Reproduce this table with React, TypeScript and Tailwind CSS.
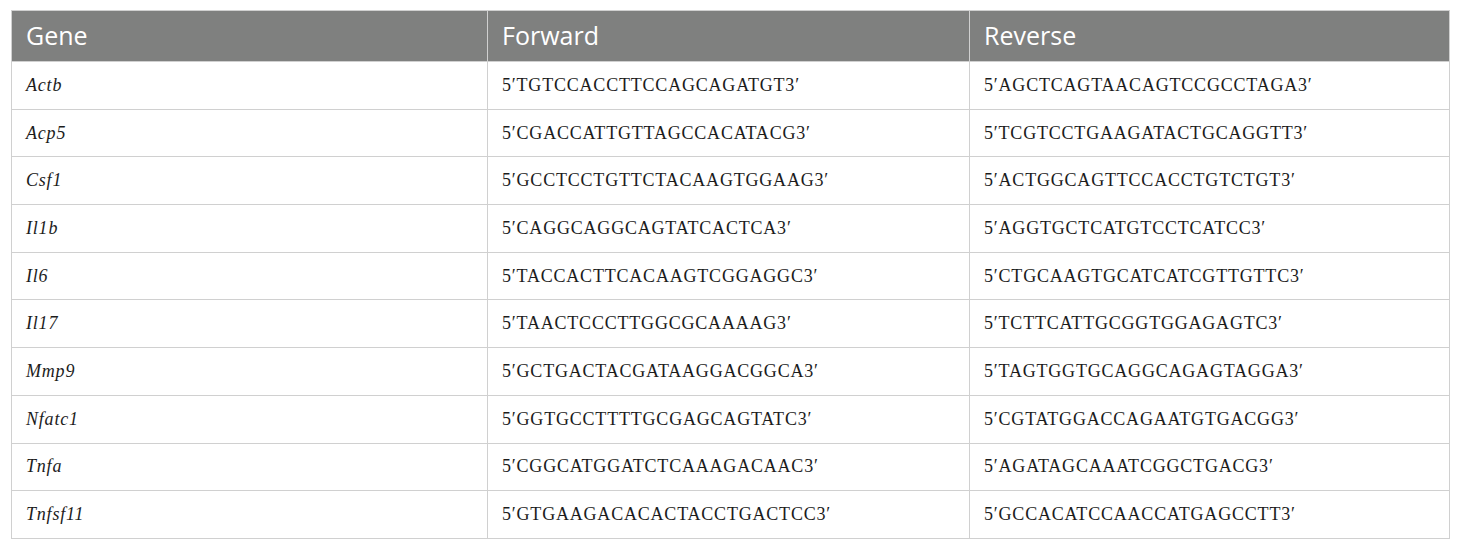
const rows = [
  ["Actb", "5′TGTCCACCTTCCAGCAGATGT3′", "5′AGCTCAGTAACAGTCCGCCTAGA3′"],
  ["Acp5", "5′CGACCATTGTTAGCCACATACG3′", "5′TCGTCCTGAAGATACTGCAGGTT3′"],
  ["Csf1", "5′GCCTCCTGTTCTACAAGTGGAAG3′", "5′ACTGGCAGTTCCACCTGTCTGT3′"],
  ["Il1b", "5′CAGGCAGGCAGTATCACTCA3′", "5′AGGTGCTCATGTCCTCATCC3′"],
  ["Il6", "5′TACCACTTCACAAGTCGGAGGC3′", "5′CTGCAAGTGCATCATCGTTGTTC3′"],
  ["Il17", "5′TAACTCCCTTGGCGCAAAAG3′", "5′TCTTCATTGCGGTGGAGAGTC3′"],
  ["Mmp9", "5′GCTGACTACGATAAGGACGGCA3′", "5′TAGTGGTGCAGGCAGAGTAGGA3′"],
  ["Nfatc1", "5′GGTGCCTTTTGCGAGCAGTATC3′", "5′CGTATGGACCAGAATGTGACGG3′"],
  ["Tnfa", "5′CGGCATGGATCTCAAAGACAAC3′", "5′AGATAGCAAATCGGCTGACG3′"],
  ["Tnfsf11", "5′GTGAAGACACACTACCTGACTCC3′", "5′GCCACATCCAACCATGAGCCTT3′"],
];

export default function App() {
  return (
    <div className="w-[1460px] h-[550px] bg-white pt-[10px] pl-[11px]">
      <table className="w-[1438px] border-collapse table-fixed">
        <colgroup>
          <col className="w-[476px]" />
          <col className="w-[482px]" />
          <col className="w-[480px]" />
        </colgroup>
        <thead>
          <tr className="h-[51px] bg-[#7f807f] text-white text-[25px] font-['Open_Sans',sans-serif]">
            <th className="border border-[#d0d0d0] px-[14px] text-left font-normal">Gene</th>
            <th className="border border-[#d0d0d0] px-[14px] text-left font-normal">Forward</th>
            <th className="border border-[#d0d0d0] px-[14px] text-left font-normal">Reverse</th>
          </tr>
        </thead>
        <tbody className="text-[#1c1c1c] text-[18px] tracking-[0.8px] font-['Liberation_Serif',serif]">
          {rows.map(([gene, fwd, rev]) => (
            <tr key={gene} className="h-[47.7px]">
              <td className="border border-[#d0d0d0] px-[14px] italic">{gene}</td>
              <td className="border border-[#d0d0d0] px-[14px]">{fwd}</td>
              <td className="border border-[#d0d0d0] px-[14px]">{rev}</td>
            </tr>
          ))}
        </tbody>
      </table>
    </div>
  );
}
